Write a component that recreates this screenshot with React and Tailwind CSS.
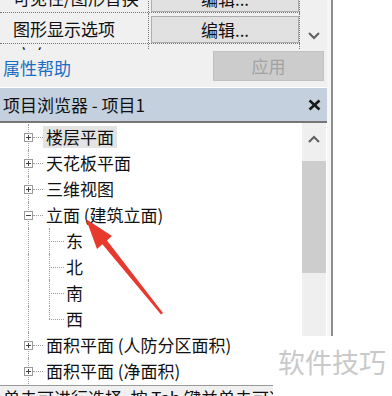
import React from 'react'

const tree = [
  { label: '楼层平面', exp: 'plus', hl: true },
  { label: '天花板平面', exp: 'plus' },
  { label: '三维视图', exp: 'plus' },
  { label: '立面 (建筑立面)', exp: 'minus' },
  { label: '东', child: true },
  { label: '北', child: true },
  { label: '南', child: true },
  { label: '西', child: true, last: true },
  { label: '面积平面 (人防分区面积)', exp: 'plus' },
  { label: '面积平面 (净面积)', exp: 'plus' },
]

function Box({ exp }) {
  return (
    <svg width="9" height="9" viewBox="0 0 9 9" className="block">
      <rect x="0.5" y="0.5" width="8" height="8" fill="#fff" stroke="#9a9a9a" />
      <line x1="2" y1="4.5" x2="7" y2="4.5" stroke="#444" />
      {exp === 'plus' && <line x1="4.5" y1="2" x2="4.5" y2="7" stroke="#444" />}
    </svg>
  )
}

function TreeRow({ item }) {
  return (
    <div className="flex h-[26px] items-center">
      <div className="relative flex h-full w-[43px] shrink-0 items-center">
        <div className="absolute left-[28px] top-0 bottom-0 border-l border-dotted border-[#9c9c9c]" />
        {item.exp && (
          <>
            <div className="relative z-10 ml-[24px]"><Box exp={item.exp} /></div>
            <div className="flex-1 border-t border-dotted border-[#9c9c9c]" />
          </>
        )}
      </div>
      {item.child && (
        <div className="relative flex h-full w-[23px] shrink-0 items-center">
          <div className={'absolute left-[6px] top-0 border-l border-dotted border-[#9c9c9c] ' + (item.last ? 'h-1/2' : 'bottom-0')} />
          <div className="ml-[6px] w-[15px] border-t border-dotted border-[#9c9c9c]" />
        </div>
      )}
      <span className={'whitespace-nowrap leading-[22px] text-[#111] ' + (item.child ? '' : 'pl-[3px] ') + (item.hl ? 'bg-[#e3e3e3] pr-[3px]' : '')}>
        {item.label}
      </span>
    </div>
  )
}

export default function App() {
  return (
    <div className="relative h-[396px] w-[392px] overflow-hidden bg-white font-['Noto_Sans_CJK_SC',sans-serif] text-[17px]">
      <div className="flex items-start">
        <div className="w-[327px] shrink-0">
          {/* properties grid */}
          <div className="flex h-[50px] items-start overflow-hidden bg-[#f0f0f0]">
            <div className="-mt-[18px] flex w-[300px] shrink-0 flex-col">
              {['可见性/图形替换', '图形显示选项'].map(name => (
                <div key={name} className="flex h-[31px] shrink-0 border-b border-dotted border-[#777]">
                  <div className="flex w-[149px] shrink-0 items-center border-r border-dotted border-[#777] pl-[13px] leading-[17px] text-[#111] whitespace-nowrap">
                    {name}
                  </div>
                  <div className="flex-1 border-r border-dotted border-[#777] pl-[2px] pt-[3px]">
                    <div className="flex h-full items-center justify-center border border-[#adadad] bg-[#e1e1e1] leading-[17px] text-[#111]">
                      编辑...
                    </div>
                  </div>
                </div>
              ))}
              <div className="flex h-[31px] shrink-0">
                <div className="w-[149px] shrink-0 border-r border-dotted border-[#777] pl-[15px] pt-[2px] leading-[17px] text-[#111]">方向</div>
                <div className="flex-1 border-r border-dotted border-[#777]" />
              </div>
            </div>
            <div className="flex flex-1 justify-center pt-[32px]">
              <svg width="12" height="8" viewBox="0 0 12 8">
                <polyline points="1,1 6,6 11,1" fill="none" stroke="#606060" strokeWidth="2" />
              </svg>
            </div>
          </div>

          {/* help + apply */}
          <div className="flex h-[38px] items-start justify-between border-b border-white bg-[#f0f0f0]">
            <span className="pl-[3px] pt-[9px] leading-[17px] text-[#1b6cc4]">属性帮助</span>
            <div className="mr-[3px] mt-[1px] flex h-[30px] w-[111px] items-center justify-center border border-[#c2c2c2] bg-[#cccccc] text-[#a2a2a2]">
              应用
            </div>
          </div>

          {/* browser header */}
          <div className="flex h-[35px] items-center justify-between border-b-2 border-[#767676] bg-[#c4d0de] pl-[3px] pr-[6px]">
            <span className="leading-[17px] text-[#111] whitespace-nowrap">项目浏览器 - 项目1</span>
            <svg width="13" height="12" viewBox="0 0 13 12">
              <line x1="1.5" y1="1.5" x2="11.5" y2="10.5" stroke="#1a1a1a" strokeWidth="2.6" />
              <line x1="11.5" y1="1.5" x2="1.5" y2="10.5" stroke="#1a1a1a" strokeWidth="2.6" />
            </svg>
          </div>

          {/* tree */}
          <div className="flex items-start bg-white">
            <div className="h-[262px] flex-1 pt-[1px]">
              {tree.map(item => <TreeRow key={item.label} item={item} />)}
            </div>
            <div className="mr-[1px] flex h-[213px] w-[24px] shrink-0 flex-col bg-[#efefef]">
              <div className="flex h-[38px] justify-center pt-[12px]">
                <svg width="12" height="8" viewBox="0 0 12 8">
                  <polyline points="1,7 6,2 11,7" fill="none" stroke="#606060" strokeWidth="2" />
                </svg>
              </div>
              <div className="h-[112px] bg-[#cdcdcd]" />
            </div>
          </div>
        </div>
        <div className="h-[336px] w-[4px] shrink-0 bg-[#f6f6f6]" />
        <div className="h-[336px] w-[2px] shrink-0 bg-[#8e8e8e]" />
      </div>

      {/* status bar */}
      <div className="h-[20px] w-[273px] overflow-hidden border-t border-[#9a9a9a] bg-[#f0f0f0] pl-[3px] pt-[3px] leading-[17px] text-[#111] whitespace-nowrap">
        单击可进行选择; 按 Tab 键并单击可选择其他项目
      </div>

      {/* watermark */}
      <div className="absolute left-[278px] top-[348px] text-[27px] leading-[27px] text-[#c9c9c9]">软件技巧</div>

      {/* red arrow */}
      <svg className="pointer-events-none absolute left-0 top-0" width="392" height="396" viewBox="0 0 392 396">
        <polygon
          points="86,219 112,236 107,240.5 163,313 161,314.6 102.4,244.3 97,249"
          fill="#e8392e"
        />
      </svg>
    </div>
  )
}
